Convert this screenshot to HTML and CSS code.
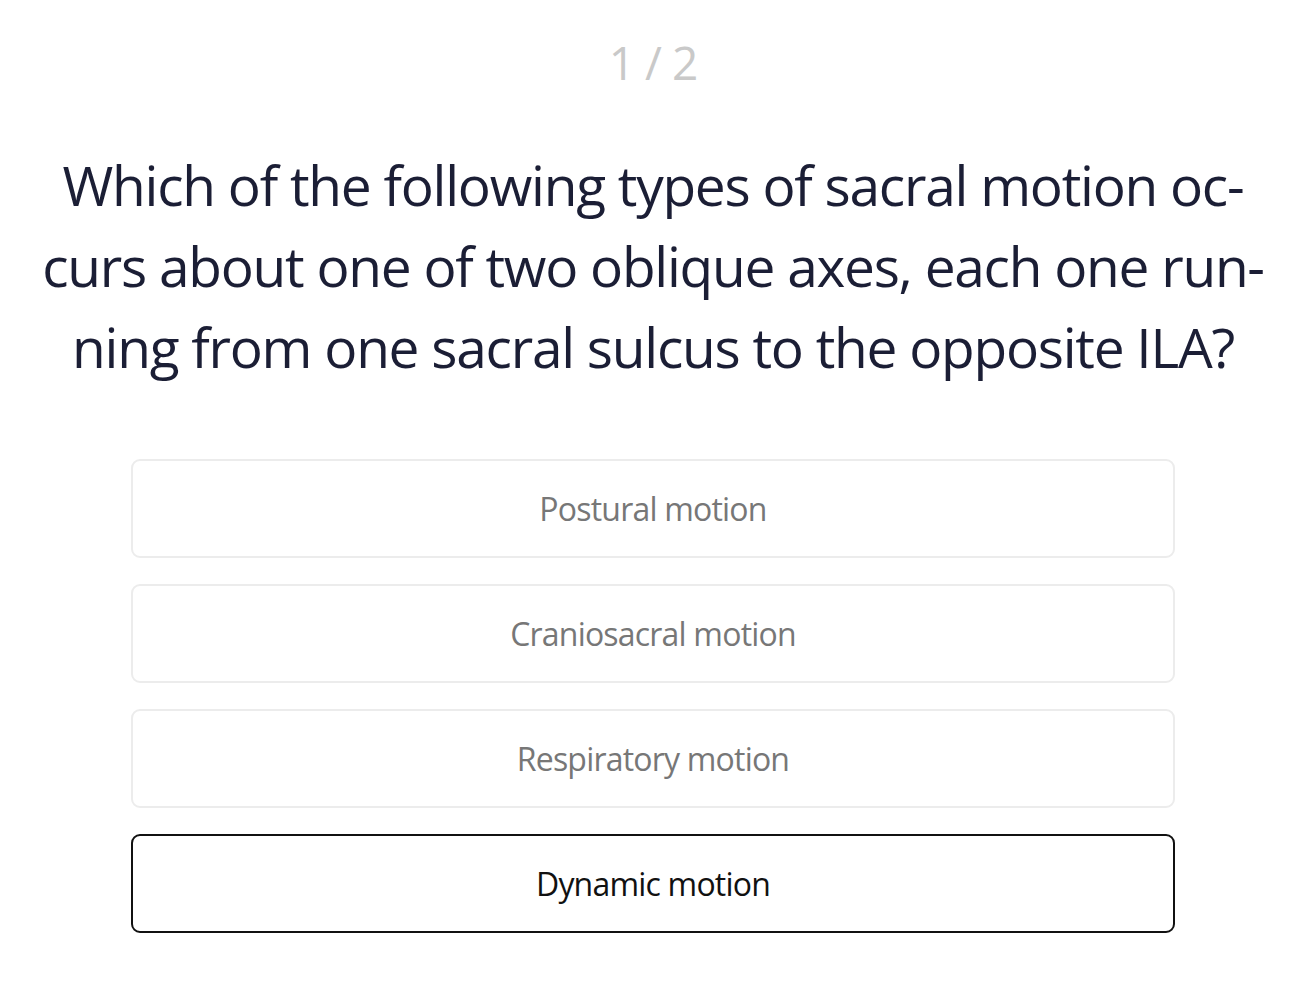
FILE: index.html
```html
<!DOCTYPE html>
<html lang="en">
<head>
<meta charset="utf-8">
<link rel="stylesheet" href="styles.css">
</head>
<body>
<main class="quiz">
  <div class="counter">1 / 2</div>
  <h1 class="question">Which of the following types of sacral motion oc-<br>curs about one of two oblique axes, each one run-<br>ning from one sacral sulcus to the opposite ILA?</h1>
  <div class="options">
    <button class="option">Postural motion</button>
    <button class="option">Craniosacral motion</button>
    <button class="option">Respiratory motion</button>
    <button class="option selected">Dynamic motion</button>
  </div>
</main>
</body>
</html>
```
FILE: styles.css
```css
html, body {
  margin: 0;
  padding: 0;
  background: #ffffff;
}
body {
  font-family: "Open Sans", "Liberation Sans", sans-serif;
}
.quiz {
  display: flex;
  flex-direction: column;
  align-items: center;
  padding-left: 10px;
  padding-top: 32px;
}
.counter {
  font-size: 46px;
  line-height: 60px;
  letter-spacing: -1px;
  color: #c9c9c9;
}
.question {
  margin: 52px 0 0 0;
  font-size: 55px;
  font-weight: 400;
  line-height: 81px;
  letter-spacing: -1.25px;
  color: #1b1e35;
  text-align: center;
  white-space: nowrap;
}
.options {
  margin-top: 72px;
  display: flex;
  flex-direction: column;
  gap: 26px;
  width: 1044px;
}
.option {
  height: 99px;
  border: 2px solid #ececec;
  border-radius: 9px;
  background: #fff;
  font-family: "Open Sans", "Liberation Sans", sans-serif;
  font-size: 32px;
  letter-spacing: -0.8px;
  color: #777777;
  padding: 0;
}
.option.selected {
  border-color: #111111;
  color: #111111;
}
```
